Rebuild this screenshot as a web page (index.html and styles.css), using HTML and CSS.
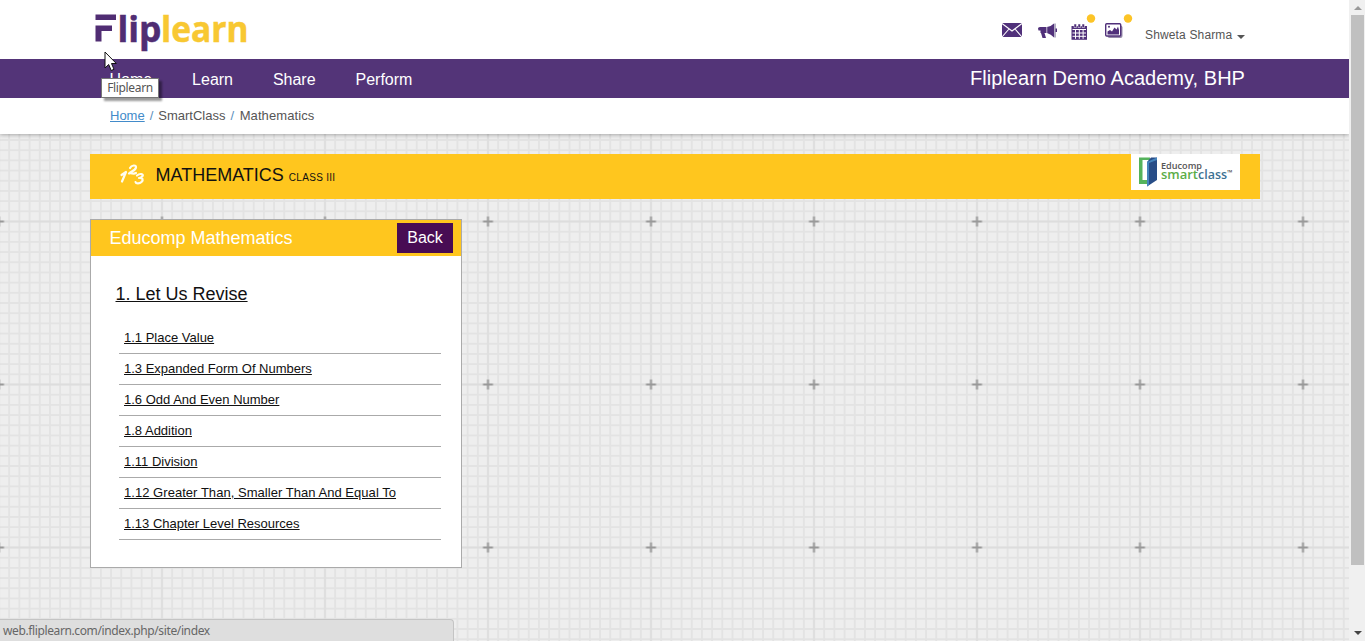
FILE: index.html
```html
<!DOCTYPE html>
<html lang="en">
<head>
<meta charset="utf-8">
<title>Fliplearn</title>
<link rel="stylesheet" href="styles.css">
</head>
<body>
<div class="window">
<div class="page">
  <svg class="grid-paper" width="1349" height="641" aria-hidden="true">
    <defs>
      <pattern id="cells" x="-1" y="58.5" width="10.1875" height="10.1875" patternUnits="userSpaceOnUse">
        <path d="M0 0V10.2M10.19 0V10.2M0 0H10.2M0 10.19H10.2" stroke="#e3e3e3" stroke-width="1.8"/>
      </pattern>
      <pattern id="marks" x="80.5" y="139.5" width="163" height="163" patternUnits="userSpaceOnUse">
        <path d="M81.5 0V163M0 82H163" stroke="#dcdcdc" stroke-width="1.5"/>
        <path d="M81.5 77V87M76.5 82H86.500" stroke="#999" stroke-width="2"/>
      </pattern>
    </defs>
    <rect width="1349" height="641" fill="#eee"/>
    <rect width="1349" height="641" fill="url(#cells)"/>
    <rect width="1349" height="641" fill="url(#marks)"/>
  </svg>
  <header class="top">
    <div class="brandbar">
      <svg class="logo" width="164" height="59" viewBox="90 0 164 59">
        <path d="M95.500 14.500H116V20H95.500ZM95.500 25.500H112V31H101.500V41.500H95.500Z" fill="#502d73"/>
        <text class="logo-text" x="117.500" y="41.500" fill="#502d73" stroke="#502d73" textLength="44" lengthAdjust="spacingAndGlyphs">lip</text>
        <text class="logo-text" x="161" y="41.500" fill="#f8c832" stroke="#f8c832" textLength="87.500" lengthAdjust="spacingAndGlyphs">learn</text>
      </svg>
      <svg class="tools" width="140" height="48" viewBox="996 5 140 48">
        <g fill="#50307a">
          <path d="M1002 23H1022V37H1002Z"/>
          <path d="M1002 23.5L1012 31L1022 23.5M1002 37L1009 29M1022 37L1015 29" fill="none" stroke="#fff" stroke-width="1.1"/>
          <path d="M1038 28.500Q1038 27 1040 27H1047Q1051 26.500 1054 23.500V37.500Q1051 34 1047 33H1044.500L1046 38H1042.500L1041 33H1040.500V30.500H1038.500Z"/>
          <path d="M1046.800 27V33" stroke="#fff" stroke-width=".7"/>
          <path d="M1055 23.500V37.500" stroke="#8b83a5" stroke-width="1.3"/>
          <path d="M1055.500 28.500H1057V32H1055.500Z"/>
          <path d="M1071.500 26H1087V39.800H1071.500Z"/>
          <path d="M1074 24H1076.500V27.500H1074ZM1078 24H1080.500V27.500H1078ZM1082 24H1084.500V27.500H1082Z" stroke="#fff" stroke-width=".5"/>
          <path d="M1072.500 29.500H1086M1072.500 33H1086M1072.500 36.300H1086M1075.500 29.500V38.800M1079.300 29.500V38.800M1083.100 29.500V38.800" stroke="#fff" stroke-width="1"/>
          <rect x="1107.500" y="25.500" width="15" height="12.500" rx="2" fill="#968ba9"/>
          <rect x="1105.700" y="23.700" width="15" height="12.300" rx="1" fill="#fff" stroke="#50307a" stroke-width="1.400"/>
          <path d="M1107.500 34.500V31.500L1110 30L1112 31.500L1114.500 27.500L1116.500 29.500L1118 26.500L1119 30V34.500Z"/>
          <circle cx="1109" cy="26.800" r="1"/>
        </g>
        <circle cx="1091" cy="18.500" r="4.200" fill="#fcc427"/>
        <circle cx="1128" cy="18.500" r="4.200" fill="#fcc427"/>
      </svg>
      <div class="user"><span class="user-name">Shweta Sharma</span><i class="caret"></i></div>
    </div>
    <nav class="menu">
      <a>Home</a><a>Learn</a><a>Share</a><a>Perform</a>
      <span class="school">Fliplearn Demo Academy, BHP</span>
    </nav>
    <div class="crumbs"><a>Home</a><b>/</b><span>SmartClass</span><b>/</b><span>Mathematics</span></div>
  </header>
  <main>
    <section class="subject">
      <svg class="numbers" width="27" height="24" viewBox="119 163 27 24" fill="none" stroke="#fffdf0" stroke-width="2.200" stroke-linecap="round" stroke-linejoin="round">
        <path d="M121.500 175L126 172L122 181.500"/>
        <path d="M130 168C131.500 165 136.500 164.500 136 167.500C135.500 170.500 131 171.500 129 173.500C131 172.500 133.500 174.500 136 173"/>
        <path d="M137 175.500C140 173 144 174 142.500 176.200C141.500 177.800 140 178 139 178C143 177.500 143.500 180 141.500 182C139.500 184 136 183.800 135.500 182"/>
      </svg>
      <h1>MATHEMATICS</h1><span class="grade">CLASS III</span>
      <svg class="smart" width="109" height="36" viewBox="1131 154 109 36">
        <rect x="1131" y="154" width="109" height="36" fill="#fff"/>
        <path d="M1139 157.500H1150V160H1142.500V180H1147V184H1139Z" fill="#55b35c"/>
        <path d="M1157 157.500V180L1147 186.500V162L1151 157.500Z" fill="#284d87"/>
        <path d="M1147 162L1157 157.500V160L1149 163V185L1147 186.500Z" fill="#4584bd"/>
        <text class="edu" x="1161" y="168.500" textLength="41" lengthAdjust="spacingAndGlyphs">Educomp</text>
        <text class="sc" x="1161" y="179" fill="#5cad48" textLength="37" lengthAdjust="spacingAndGlyphs">smart</text>
        <text class="sc" x="1198" y="179" fill="#3d7192" textLength="29" lengthAdjust="spacingAndGlyphs">class</text>
        <text class="tm" x="1227" y="175">™</text>
      </svg>
    </section>
    <section class="card">
      <div class="card-head"><h2>Educomp Mathematics</h2><a class="back">Back</a></div>
      <h3>1. Let Us Revise</h3>
      <ul>
        <li><a>1.1 Place Value</a></li>
        <li><a>1.3 Expanded Form Of Numbers</a></li>
        <li><a>1.6 Odd And Even Number</a></li>
        <li><a>1.8 Addition</a></li>
        <li><a>1.11 Division</a></li>
        <li><a class="wide">1.12 Greater Than, Smaller Than And Equal To</a></li>
        <li><a>1.13 Chapter Level Resources</a></li>
      </ul>
    </section>
  </main>
</div>
<div class="scrollbar"><i class="arrow up"></i><i class="thumb"></i><i class="arrow down"></i></div>
<div class="tooltip">Fliplearn</div>
<svg class="cursor" width="14" height="22" viewBox="0 0 14 22"><path d="M1 1V17L4.700 13.500L7.200 19.500L10 18.300L7.500 12.500H12.300Z" fill="#fff" stroke="#111" stroke-width="1"/></svg>
<div class="status">web.fliplearn.com/index.php/site/index</div>
</div>
</body>
</html>
```
FILE: styles.css
```css
* { box-sizing: border-box; }
body { margin: 0; font-family: "Liberation Sans", Arial, sans-serif; font-size: 13px; color: #555; }
h1, h2, h3, ul { margin: 0; padding: 0; font-weight: normal; list-style: none; }
.window { position: relative; display: flex; width: 1365px; height: 641px; overflow: hidden; }
.page { position: relative; width: 1349px; height: 641px; overflow: hidden; }
.grid-paper { position: absolute; left: 0; top: 0; }
.top { position: relative; background: #fff; height: 134px; box-shadow: 0 1px 4px rgba(0,0,0,.3); }
.brandbar { height: 59px; display: flex; padding-left: 90px; }
.logo { display: block; flex: none; }
.logo-text { font: bold 35px "Open Sans", sans-serif; stroke-width: .5px; }
.tools { margin: 5px 0 0 742px; flex: none; }
.user { display: flex; align-items: center; height: 18px; margin: 26px 0 0 9px; font-size: 12px; color: #555; white-space: nowrap; }
.user-name { letter-spacing: .15px; }
.caret { border: 4px solid transparent; border-top-color: #555; border-bottom: 0; margin: 3px 0 0 5px; }
.menu { display: flex; height: 39px; padding: 0 104px 0 109.500px; background: #533478; color: #fff; font-size: 16px; line-height: 41px; }
.menu a { margin-right: 39.900px; }
.school { margin-left: auto; font-size: 20px; line-height: 38px; letter-spacing: .03px; }
.crumbs { display: flex; height: 36px; padding-left: 110px; line-height: 35px; }
.crumbs a { color: #428bca; text-decoration: underline; }
.crumbs b { font-weight: normal; color: #5b8fbd; margin: 0 5px; }
.crumbs span:last-child { letter-spacing: .1px; margin-left: .5px; }
main { position: relative; padding: 20px 89px 0 90px; }
.subject { display: flex; height: 45px; background: #ffc61e; color: #111; }
.numbers { margin: 9px 0 0 29px; }
.subject h1 { font-size: 18px; line-height: 42px; margin-left: 9.500px; }
.grade { font-size: 10px; line-height: 47px; margin-left: 5px; letter-spacing: .3px; }
.smart { margin: 0 20px 0 auto; }
.edu { font: 600 8.500px "Open Sans", sans-serif; fill: #555; }
.sc { font: 600 13px "Open Sans", sans-serif; }
.tm { font: 7px "Open Sans", sans-serif; fill: #333; }
.card { width: 372px; height: 349px; margin-top: 20px; background: #fff; border: 1px solid #aaa; color: #111; }
.card-head { display: flex; align-items: center; justify-content: space-between; height: 36px; padding: 0 8px 0 18.500px; background: #ffc61e; color: #fff; }
.card-head h2 { font-size: 18px; }
.back { width: 56px; height: 30px; background: #480c54; font-size: 16px; line-height: 30px; text-align: center; }
.card h3 { margin: 27px 0 0 24.500px; font-size: 18px; line-height: 22px; text-decoration: underline; }
.card ul { margin: 18px 20px 0 28px; }
.card li { height: 31px; padding-left: 5px; line-height: 30px; border-bottom: 1px solid #aaa; text-decoration: underline; }
.wide { letter-spacing: .04px; }
.scrollbar { display: flex; flex-direction: column; align-items: center; width: 16px; height: 641px; background: #f0f0f0; padding: 6px 0 6px 1px; }
.arrow { border: 4px solid transparent; }
.up { border-top: 0; border-bottom-color: #999; }
.down { border-bottom: 0; border-top-color: #444; margin-top: auto; }
.thumb { width: 13px; height: 550px; margin-top: 5px; background: #c0c0c0; }
.tooltip { position: absolute; left: 101px; top: 78px; width: 58px; height: 20px; border: 1px solid #767676; background: #fff; box-shadow: 3px 3px 2px rgba(0,0,0,.4); font: 12px/18px "Noto Sans", sans-serif; letter-spacing: -.35px; text-align: center; color: #555; }
.cursor { position: absolute; left: 104px; top: 51px; }
.status { position: absolute; left: 0; bottom: 0; width: 454px; height: 22px; padding-left: 3px; background: #dedede; border: solid #c4c4c4; border-width: 1px 1px 0 0; border-radius: 0 4px 0 0; font: 12px/22px "Noto Sans", sans-serif; letter-spacing: -.38px; color: #666; }
```
